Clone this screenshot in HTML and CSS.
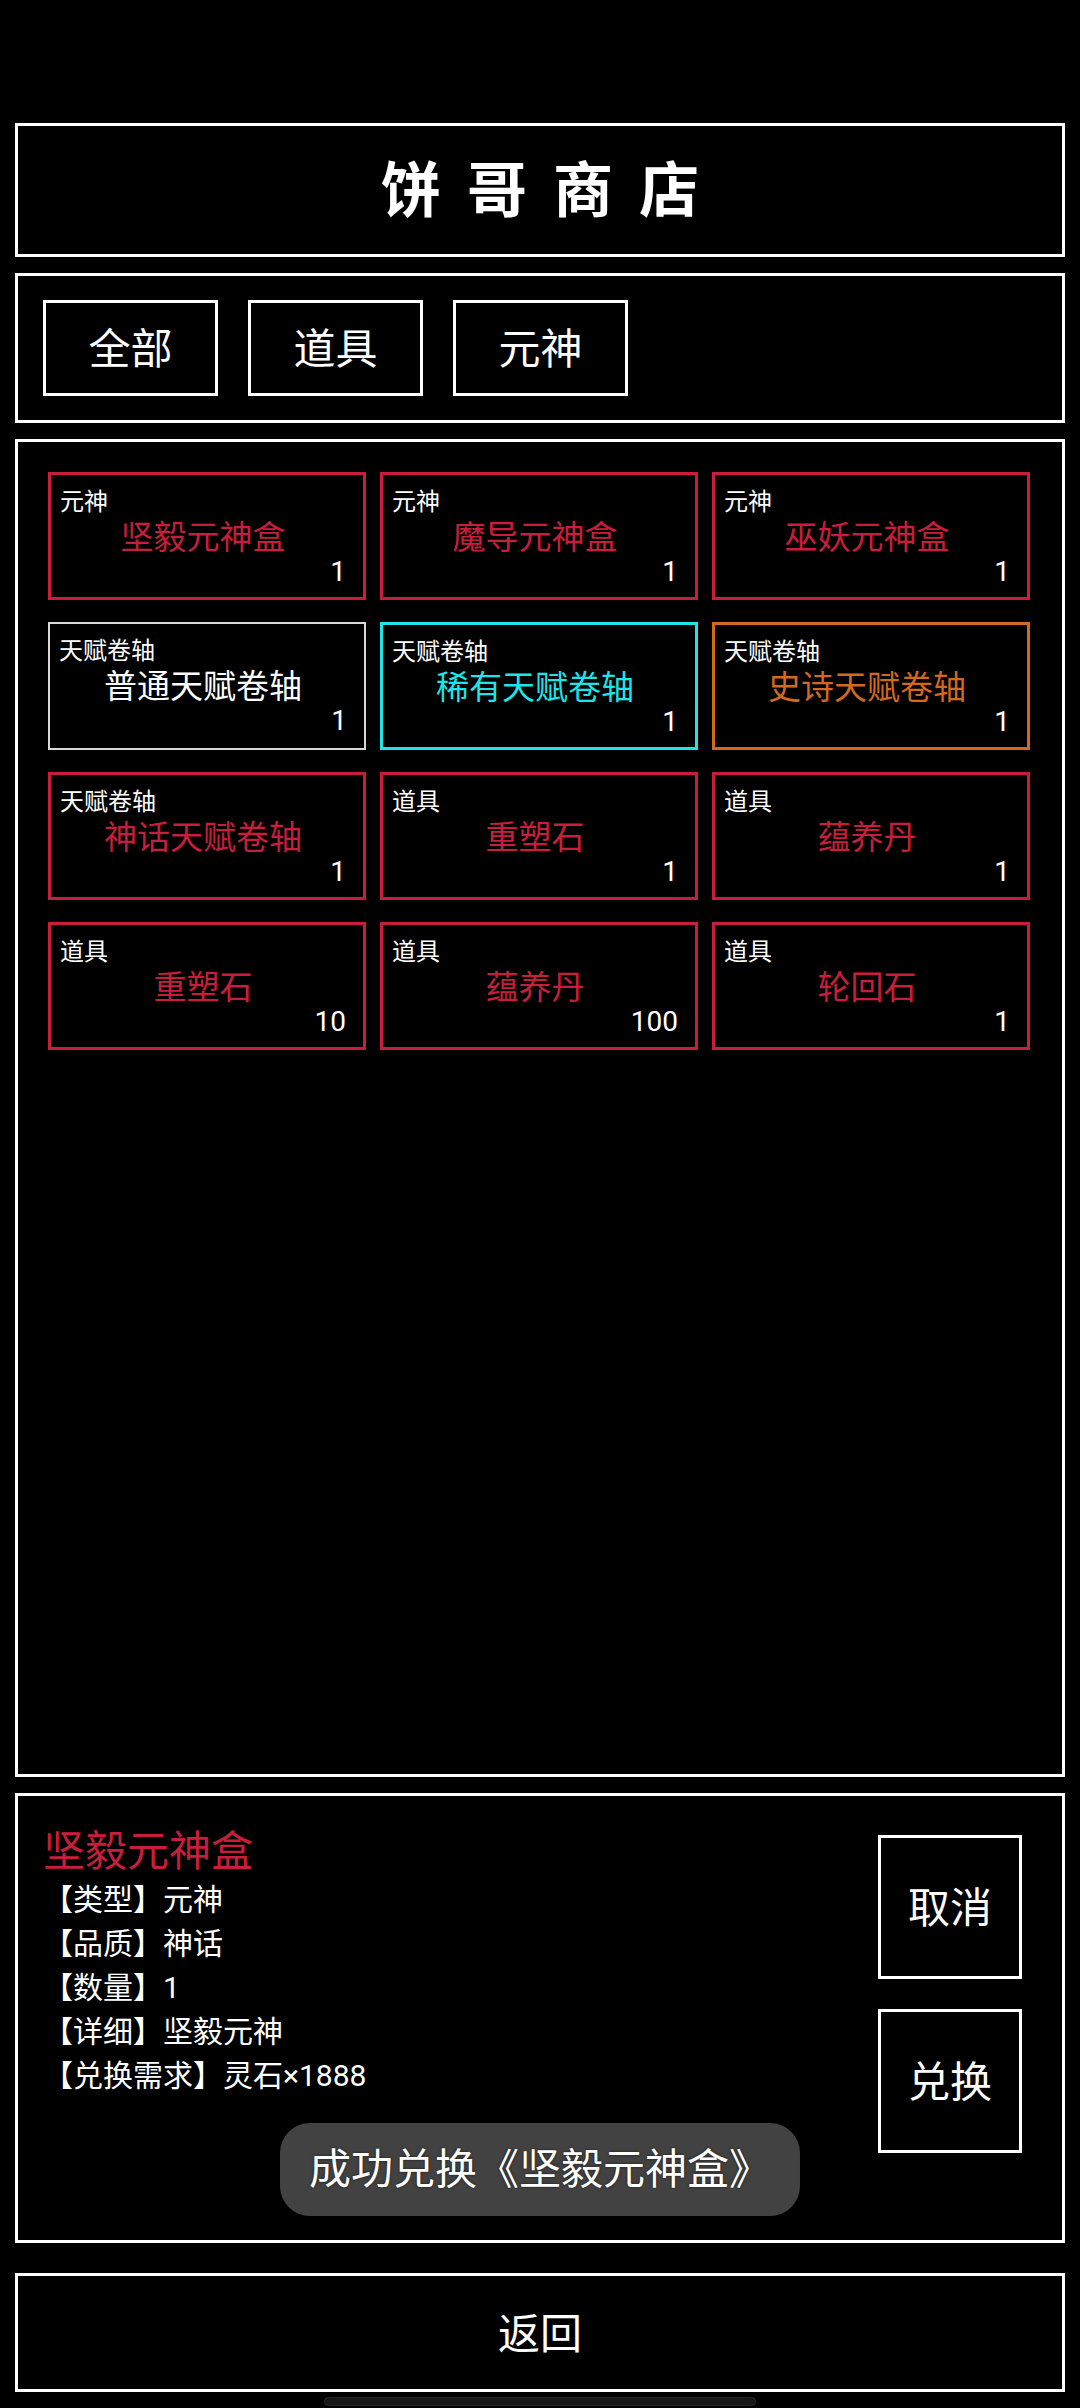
FILE: index.html
```html
<!DOCTYPE html>
<html lang="zh-CN">
<head>
<meta charset="utf-8">
<title>饼哥商店</title>
<link rel="stylesheet" href="styles.css">
</head>
<body>
<div class="page">
  <header class="panel title-panel">
    <h1 class="title">饼哥商店</h1>
  </header>

  <nav class="panel tabs-panel">
    <div class="tab">全部</div>
    <div class="tab">道具</div>
    <div class="tab">元神</div>
  </nav>

  <section class="panel grid-panel">
    <div class="grid">
      <div class="card red"><div class="cat">元神</div><div class="name">坚毅元神盒</div><div class="count">1</div></div>
      <div class="card red"><div class="cat">元神</div><div class="name">魔导元神盒</div><div class="count">1</div></div>
      <div class="card red"><div class="cat">元神</div><div class="name">巫妖元神盒</div><div class="count">1</div></div>

      <div class="card white"><div class="cat">天赋卷轴</div><div class="name">普通天赋卷轴</div><div class="count">1</div></div>
      <div class="card cyan"><div class="cat">天赋卷轴</div><div class="name">稀有天赋卷轴</div><div class="count">1</div></div>
      <div class="card orange"><div class="cat">天赋卷轴</div><div class="name">史诗天赋卷轴</div><div class="count">1</div></div>

      <div class="card red"><div class="cat">天赋卷轴</div><div class="name">神话天赋卷轴</div><div class="count">1</div></div>
      <div class="card red"><div class="cat">道具</div><div class="name">重塑石</div><div class="count">1</div></div>
      <div class="card red"><div class="cat">道具</div><div class="name">蕴养丹</div><div class="count">1</div></div>

      <div class="card red"><div class="cat">道具</div><div class="name">重塑石</div><div class="count">10</div></div>
      <div class="card red"><div class="cat">道具</div><div class="name">蕴养丹</div><div class="count">100</div></div>
      <div class="card red"><div class="cat">道具</div><div class="name">轮回石</div><div class="count">1</div></div>
    </div>
  </section>

  <section class="panel detail-panel">
    <div class="info">
      <div class="info-title">坚毅元神盒</div>
      <div class="info-line">【类型】元神</div>
      <div class="info-line">【品质】神话</div>
      <div class="info-line">【数量】1</div>
      <div class="info-line">【详细】坚毅元神</div>
      <div class="info-line">【兑换需求】灵石×1888</div>
    </div>
    <div class="actions">
      <div class="action-btn">取消</div>
      <div class="action-btn">兑换</div>
    </div>
    <div class="toast">成功兑换《坚毅元神盒》</div>
  </section>

  <footer class="panel back-panel">返回</footer>
  <div class="nav-handle"></div>
</div>
</body>
</html>
```

FILE: styles.css
```css
html, body {
  margin: 0;
  padding: 0;
  background: #000;
}

body {
  width: 1080px;
  height: 2408px;
  overflow: hidden;
  color: #fff;
  font-family: Roboto, "Noto Sans CJK SC", "Noto Sans", sans-serif;
}

.page {
  display: flex;
  flex-direction: column;
  box-sizing: border-box;
  height: 2408px;
  padding: 123px 15px 0;
}

.panel {
  box-sizing: border-box;
  border: 3px solid #fff;
}

/* Title */
.title-panel {
  height: 134px;
  display: flex;
  align-items: center;
  justify-content: center;
  padding-top: 4px;
}

.title {
  margin: 0;
  font-size: 60px;
  font-weight: 700;
  line-height: 70px;
  letter-spacing: 26px;
  padding-left: 26px;
}

/* Tabs */
.tabs-panel {
  margin-top: 16px;
  height: 150px;
  display: flex;
  gap: 30px;
  padding: 24px 25px;
}

.tab {
  box-sizing: border-box;
  width: 175px;
  height: 96px;
  border: 3px solid #fff;
  display: flex;
  align-items: center;
  justify-content: center;
  padding-top: 4px;
  font-size: 42px;
  line-height: 1;
}

/* Grid */
.grid-panel {
  margin-top: 16px;
  height: 1338px;
  padding: 30px 0 0 30px;
}

.grid {
  display: grid;
  grid-template-columns: repeat(3, 318px);
  grid-auto-rows: 128px;
  column-gap: 14px;
  row-gap: 22px;
}

.card {
  box-sizing: border-box;
  height: 128px;
  border: 3px solid #c81e3c;
  padding: 12px 17px 0 9px;
  display: flex;
  flex-direction: column;
}

.cat {
  font-size: 24px;
  line-height: 30px;
  color: #fff;
}

.name {
  font-size: 33px;
  line-height: 42px;
  text-align: center;
}

.count {
  font-size: 28px;
  line-height: 26px;
  text-align: right;
  color: #fff;
}

.card.red { border-color: #c81e3c; }
.card.red .name { color: #c81e3c; }

.card.white { border: 2px solid #d8d8d8; }
.card.white .name { color: #fff; }

.card.cyan { border-color: #1ee4e8; }
.card.cyan .name { color: #1ee4e8; }

.card.orange { border-color: #d2691e; }
.card.orange .name { color: #d2691e; }

/* Detail */
.detail-panel {
  position: relative;
  margin-top: 16px;
  height: 450px;
  display: flex;
  justify-content: space-between;
}

.info {
  padding: 30px 0 0 25px;
}

.info-title {
  font-size: 42px;
  line-height: 52px;
  color: #c81e3c;
}

.info-line {
  font-size: 30px;
  line-height: 44px;
  color: #fff;
}

.actions {
  display: flex;
  flex-direction: column;
  gap: 30px;
  padding: 39px 40px 0 0;
}

.action-btn {
  box-sizing: border-box;
  width: 144px;
  height: 144px;
  border: 3px solid #fff;
  display: flex;
  align-items: center;
  justify-content: center;
  padding-top: 4px;
  font-size: 42px;
  line-height: 1;
}

.toast {
  position: absolute;
  top: 327px;
  left: 50%;
  transform: translateX(-50%);
  height: 93px;
  padding: 0 29px;
  border-radius: 30px;
  background: #424242;
  color: #fff;
  font-size: 42px;
  line-height: 93px;
  white-space: nowrap;
  text-shadow: 0 0 3px rgba(0, 0, 0, 0.6);
}

/* Back */
.back-panel {
  margin-top: 30px;
  height: 119px;
  display: flex;
  align-items: center;
  justify-content: center;
  padding-top: 4px;
  font-size: 42px;
  line-height: 1;
}

.nav-handle {
  box-sizing: border-box;
  margin: 5px auto 0;
  width: 432px;
  height: 9px;
  border-radius: 5px;
  background: #161616;
  border: 1px solid #262626;
}
```
